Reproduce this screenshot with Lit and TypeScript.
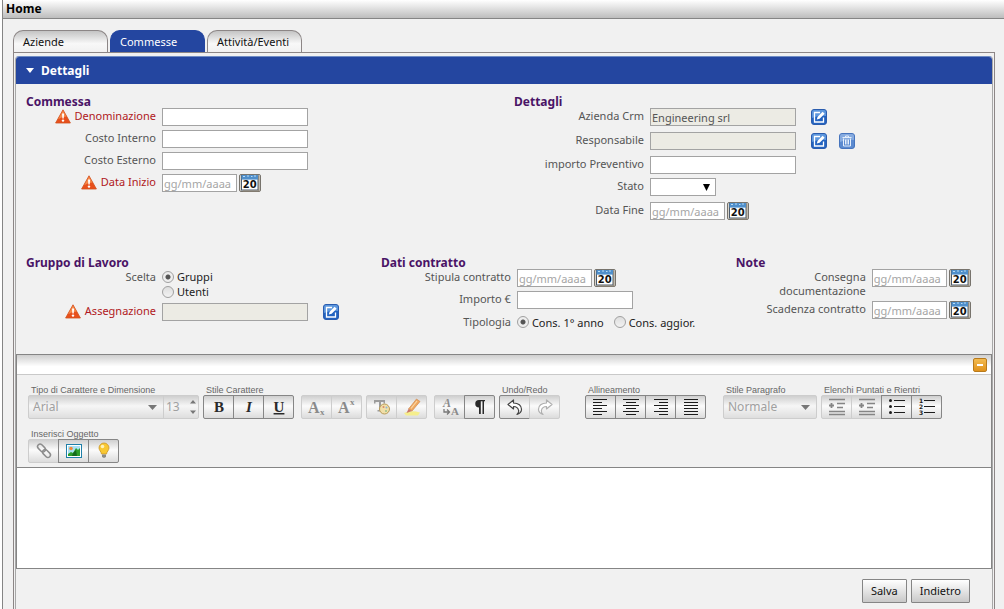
import { LitElement, html, css, svg, nothing } from "lit";
import { customElement, property, state } from "lit/decorators.js";
import { classMap } from "lit/directives/class-map.js";

const warnIcon = html`<svg class="warn" width="16" height="15" viewBox="0 0 16 15" aria-hidden="true">
  <path d="M8 .8 15.4 14H.6Z" fill="#e8501c" stroke="#d0501c" stroke-width=".8" stroke-linejoin="round"/>
  <path d="M8 1.6 11.3 7.6Q7 8 3.2 10.2Z" fill="#f58a4a"/>
  <path d="M7 4.6h2.1L8.7 9.6H7.4Z" fill="#fff"/><circle cx="8" cy="11.6" r="1.2" fill="#fff"/>
</svg>`;

const editIcon = html`<svg width="16" height="16" viewBox="0 0 16 16" aria-hidden="true">
  <rect x=".5" y=".5" width="15" height="15" rx="2.5" fill="#2363c0" stroke="#2a5cae"/>
  <path d="M1 3Q1 1 3 1h10q2 0 2 2v4Q8 6 1 9Z" fill="#5d97dd"/>
  <path d="M9 3.500H3.500v9.500h9V8.500" fill="none" stroke="#fff" stroke-width="1.300"/>
  <path d="M5.800 10.600 6.600 7.800 11.600 2.800 13.600 4.800 8.600 9.800Z" fill="#fff"/>
</svg>`;

const trashIcon = html`<svg width="16" height="16" viewBox="0 0 16 16" aria-hidden="true">
  <rect x=".5" y=".5" width="15" height="15" rx="2.5" fill="#5b8ad0" stroke="#4674bd"/>
  <path d="M1 3Q1 1 3 1h10q2 0 2 2v4Q8 6 1 9Z" fill="#86abe0"/>
  <path d="M3.500 4.500h9M6.500 4V3h3v1M4.500 5.500v7.500h7V5.500M6.500 6.500v5M8 6.500v5M9.500 6.500v5" fill="none" stroke="#e4eefb" stroke-width="1"/>
</svg>`;

const calendarIcon = html`<svg width="22" height="18" viewBox="0 0 22 18" aria-hidden="true">
  <rect x=".5" y=".5" width="21" height="17" rx="1.5" fill="#d8d4cc" stroke="#77736c"/>
  <rect x="2.5" y="1.5" width="16.5" height="14.5" fill="#fff" stroke="#4a5a6c"/>
  <rect x="2.5" y="1" width="16.5" height="4.6" fill="#4f8fcb"/>
  <path d="M4 2.5h2M8 2h2M12 2.5h1.5M15 2h2" stroke="#b9dcf5"/>
  <path d="M19.8 2v15H4" fill="none" stroke="#8e8474"/>
  <text x="10.800" y="14" text-anchor="middle" font-family="DejaVu Sans" font-weight="bold" font-size="10" fill="#111">20</text>
</svg>`;

@customElement("crm-field")
class CrmField extends LitElement {
  @property() label = "";
  @property() kind = "text";
  @property() value = "";
  @property({ type: Boolean }) required = false;
  @property({ type: Boolean }) locked = false;
  @property({ type: Boolean }) editable = false;
  @property({ type: Boolean }) removable = false;

  static styles = css`
    :host { display: grid; grid-template-columns: 130px auto; justify-content: start; column-gap: 6px; align-items: start; min-height: 22px; }
    :host([tall]) { min-height: 24px; }
    :host([double]) { min-height: 32px; }
    .label { display: flex; justify-content: flex-end; gap: 4px; text-align: right; line-height: 14px; padding-top: 1px; color: #555; }
    .required { color: #b01822; }
    .warn { flex: none; }
    .line { display: flex; align-items: center; height: 18px; }
    input, select { box-sizing: border-box; margin: 0; width: 146px; height: 18px; border: 1px solid #a3a3a3; border-radius: 0; padding: 0 1px; font: inherit; background: #fff; color: #333; outline: none; }
    .date { width: 75px; }
    .short { width: 116px; }
    input:read-only { background: #ecebe4; color: #555; }
    input::placeholder { color: #a5a5a5; opacity: 1; }
    button { display: block; border: 0; padding: 0; background: none; line-height: 0; cursor: pointer; }
    .cal { margin-left: 2px; }
    .tool { margin-left: 12px; }
    .tool:first-of-type { margin-left: 15px; }
    .pick { display: grid; }
    .pick select { grid-area: 1 / 1; width: 66px; appearance: none; }
    .arrow { grid-area: 1 / 1; justify-self: end; align-self: center; margin-right: 6px; pointer-events: none; }
  `;

  private control() {
    if (this.kind === "select")
      return html`<span class="pick"><select id="c"><option></option></select>
        <svg class="arrow" width="7" height="7" viewBox="0 0 7 7"><path d="M0 0h7L3.500 7Z" fill="#000"/></svg></span>`;
    if (this.kind === "date")
      return html`<input id="c" class="date" placeholder="gg/mm/aaaa">
        <button class="cal" aria-label="Calendario">${calendarIcon}</button>`;
    return html`<input id="c" class=${classMap({ short: this.kind === "short" })} .value=${this.value} ?readonly=${this.locked}>`;
  }

  render() {
    return html`
      <label for="c" class=${classMap({ label: true, required: this.required })}>
        ${this.required ? warnIcon : nothing}<span>${this.label}</span>
      </label>
      <div class="line">
        ${this.control()}
        ${this.editable ? html`<button class="tool" aria-label="Modifica">${editIcon}</button>` : nothing}
        ${this.removable ? html`<button class="tool" aria-label="Elimina">${trashIcon}</button>` : nothing}
      </div>`;
  }
}

@customElement("crm-choice")
class CrmChoice extends LitElement {
  @property() label = "";
  @property({ type: Array }) options: string[] = [];

  static styles = css`
    :host { display: block; padding-bottom: 4px; }
    fieldset { display: grid; grid-template-columns: 130px auto; justify-content: start; column-gap: 6px; margin: 0; border: 0; padding: 0; min-width: 0; }
    .label { text-align: right; line-height: 16px; color: #555; }
    .options { display: flex; flex-direction: column; }
    :host([inline]) fieldset { padding-top: 1px; }
    :host([inline]) .options { flex-direction: row; gap: 10px; }
    .option { display: flex; align-items: center; gap: 3px; line-height: 15px; color: #222; }
    input { appearance: none; box-sizing: border-box; width: 12px; height: 12px; margin: 0; border: 1px solid #a0a0a0; border-radius: 50%; background: linear-gradient(#dedede, #f2f2f2); }
    input:checked { background: radial-gradient(circle, #555 0 2px, #eee 3px); }
  `;

  render() {
    return html`<fieldset aria-label=${this.label}>
      <span class="label">${this.label}</span>
      <div class="options">${this.options.map((o, i) => html`
        <label class="option"><input type="radio" name="choice" ?checked=${i === 0}>${o}</label>`)}
      </div></fieldset>`;
  }
}

type Tool = { name: string; icon: unknown; off?: boolean };

const glyph = (body: unknown) => html`<svg width="20" height="20" viewBox="0 0 20 20" aria-hidden="true">${body}</svg>`;
const letter = (t: string, extra = "") => svg`<text x="10" y="15" text-anchor="middle" font-family="Liberation Serif" font-weight="bold" font-size="15"
  font-style=${extra === "i" ? "italic" : "normal"} text-decoration=${extra === "u" ? "underline" : "none"} fill="#2a2a2a">${t}</text>`;
const rules = (rows: number[][]) => svg`<path d=${rows.map(([a, b], i) => `M${a} ${2.5 + i * 3}H${b}`).join("")} stroke="#1c1c1c" stroke-width="1.1"/>`;
const indent = svg`<path d="M2 2.500h16M10 6.500h8M10 10.500h6M2 14.500h16M2 17.500h16" stroke="#858585" stroke-width="1.500"/><path d="M2 8.500h5M4.500 6v5" stroke="#858585" stroke-width="1.800"/>`;

const styleTools: Tool[] = [
  { name: "Grassetto", icon: glyph(letter("B")) },
  { name: "Corsivo", icon: glyph(letter("I", "i")) },
  { name: "Sottolineato", icon: glyph(letter("U", "u")) },
];
const scriptTools: Tool[] = [
  { name: "Pedice", off: true, icon: glyph(svg`<g font-family="Liberation Serif" font-weight="bold" fill="#8a8a8a"><text x="1" y="16" font-size="16">A</text><text x="13" y="18" font-size="9">x</text></g>`) },
  { name: "Apice", off: true, icon: glyph(svg`<g font-family="Liberation Serif" font-weight="bold" fill="#8a8a8a"><text x="1" y="16" font-size="16">A</text><text x="13" y="8" font-size="9">x</text></g>`) },
];
const colorTools: Tool[] = [
  { name: "Colore testo", off: true, icon: glyph(svg`<path d="M2 3h11v3.500h-1.500V5H9v8h1.500v1.500h-5V13H7V5H3.500v1.500H2Z" fill="#9c9c9c"/>
    <circle cx="12.500" cy="12" r="5" fill="#f1dfa8" stroke="#b79a58"/><circle cx="11.500" cy="10" r="1" fill="#d98a6a"/><circle cx="14.500" cy="10.500" r="1" fill="#8fb6d8"/><circle cx="14" cy="14" r="1" fill="#97c08a"/>`) },
  { name: "Evidenziatore", off: true, icon: glyph(svg`<path d="M2 16Q9 13 18 15.500L16 18.500H4Z" fill="#f5ee8c"/><path d="M14.500 2 18 4.500 10 14 6.500 12Z" fill="#f0a860" stroke="#cf8a50" stroke-width=".7"/>
    <path d="M6.500 12 10 14 4.500 16Z" fill="#c9776a"/><path d="M15 4 9 11.500" stroke="#fbd9a8" stroke-width="1.200"/>`) },
];
const formatTools: Tool[] = [
  { name: "Rimuovi formato", off: true, icon: glyph(svg`<g font-family="Liberation Serif" font-weight="bold" fill="#8a8a8a"><text x="3" y="10" font-size="12" font-style="italic">A</text><text x="11" y="18" font-size="11">A</text></g>
    <path d="M4 12v3h5M7 12.500 9.500 15 7 17.500" fill="none" stroke="#777" stroke-width="1.300"/>`) },
  { name: "Mostra paragrafi", icon: glyph(svg`<path d="M9 17V10.500A3.700 3.700 0 0 1 9 3h6v1.300h-1V17h-1.500V4.300H10.800V17Z" fill="#2a2a2a"/>`) },
];
const undoArrow = svg`<path d="M3 7.500 8.500 3v3c5 0 8 2.800 8 6.200 0 2.500-1.700 4.300-4.500 5.300 1.400-1.300 2-2.500 1.600-4C13 10.300 11 9.600 8.500 9.500V12Z" fill="#fff" stroke="currentColor" stroke-width="1.200" stroke-linejoin="round"/>`;
const undoTools: Tool[] = [
  { name: "Annulla", icon: glyph(svg`<g color="#444">${undoArrow}</g>`) },
  { name: "Ripeti", off: true, icon: glyph(svg`<g color="#b0b0b0" transform="matrix(-1 0 0 1 20 0)">${undoArrow}</g>`) },
];
const alignTools: Tool[] = [
  { name: "Sinistra", icon: glyph(rules([[2, 16], [2, 11], [2, 16], [2, 11], [2, 16], [2, 11]])) },
  { name: "Centro", icon: glyph(rules([[2, 18], [5, 15], [2, 18], [5, 15], [2, 18], [5, 15]])) },
  { name: "Destra", icon: glyph(rules([[3, 17], [8, 17], [3, 17], [8, 17], [3, 17], [8, 17]])) },
  { name: "Giustificato", icon: glyph(rules([[3, 17], [3, 17], [3, 17], [3, 17], [3, 17], [3, 17]])) },
];
const listTools: Tool[] = [
  { name: "Riduci rientro", off: true, icon: glyph(indent) },
  { name: "Aumenta rientro", off: true, icon: glyph(indent) },
  { name: "Elenco puntato", icon: glyph(svg`<path d="M7 3.500h11M7 9.500h11M7 15.500h11" stroke="#1c1c1c"/><g fill="#1c1c1c"><circle cx="3.500" cy="3.500" r="1.500"/><circle cx="3.500" cy="9.500" r="1.500"/><circle cx="3.500" cy="15.500" r="1.500"/></g>`) },
  { name: "Elenco numerato", icon: glyph(svg`<path d="M7 3.500h11M7 9.500h11M7 15.500h11" stroke="#1c1c1c"/><g font-family="DejaVu Sans" font-weight="bold" font-size="6" fill="#1c1c1c"><text x="2" y="6">1</text><text x="2" y="12">2</text><text x="2" y="18">3</text></g>`) },
];
const insertTools: Tool[] = [
  { name: "Collegamento", off: true, icon: glyph(svg`<g fill="none" stroke="#8c8c8c" stroke-width="1.500"><rect x="3" y="4.500" width="9" height="5" rx="2.500" transform="rotate(45 7.500 7)"/><rect x="8" y="10" width="9" height="5" rx="2.500" transform="rotate(45 12.500 12.500)"/></g>`) },
  { name: "Immagine", icon: glyph(svg`<rect x="2.500" y="3.500" width="15" height="13" fill="#fff" stroke="#1e7fa8"/><rect x="4" y="5" width="12" height="10" fill="#a8e0f4"/><circle cx="7" cy="7.500" r="1.800" fill="#ef8a3c"/><path d="M4 15v-2l3-2 2 1 3-5 2 2 2-2v8Z" fill="#2c9e2c"/><path d="M9 12 12 9l1 6H8Z" fill="#146b1c"/>`) },
  { name: "Suggerimento", icon: glyph(svg`<path d="M10 2a5 5 0 0 1 5 5c0 2.300-2.200 3.500-2.500 6h-5C7.200 10.500 5 9.300 5 7a5 5 0 0 1 5-5Z" fill="#f8c832" stroke="#c8942a" stroke-width=".8"/><circle cx="8.500" cy="5.500" r="1.800" fill="#fff2b8"/><path d="M8 13.500h4v2.500l-2 1-2-1Z" fill="#8a8a86"/>`) },
];

@customElement("crm-editor")
class CrmEditor extends LitElement {
  static styles = css`
    :host { display: block; border: 1px solid #858585; }
    .bar { display: flex; justify-content: flex-end; align-items: center; height: 19px; padding-right: 4px; border-bottom: 1px solid #c9c9c9; background: linear-gradient(#cfcfcf, #fff 60%); }
    button { cursor: pointer; font: inherit; }
    .min { width: 14px; height: 14px; border: 1px solid #b87a1c; border-radius: 2px; padding: 0; background: linear-gradient(#f3bb50, #e0921c); display: grid; place-items: center; }
    .tools { display: flex; flex-wrap: wrap; gap: 8px 7px; padding: 8px 11px 4px; }
    .cluster { display: flex; gap: 4px; align-items: flex-end; }
    .align { margin: 0 10px 0 18px; }
    .caption { height: 12px; padding-left: 3px; font: 9px/14px "Liberation Sans", Arial, sans-serif; color: #666; white-space: nowrap; }
    .group { display: flex; }
    .tool { box-sizing: border-box; width: 31px; height: 24px; margin-right: -1px; border: 1px solid #868686; padding: 0; display: grid; place-items: center; background: linear-gradient(#cfcfcf, #fbfbfb 45%, #dcdcdc); }
    .tool:first-child { border-radius: 2px 0 0 2px; }
    .tool:last-child { border-radius: 0 2px 2px 0; margin-right: 0; }
    .tool:disabled { border-color: #cdcdcd; }
    .combo { display: grid; box-sizing: border-box; height: 24px; border: 1px solid #cdcdcd; border-radius: 2px; background: linear-gradient(#cfcfcf, #f6f6f6 45%, #dedede); font-size: 12px; }
    .font { grid-template-columns: 134px 35px; }
    .style { grid-template-columns: 92px; }
    select, .size { grid-row: 1; appearance: none; border: 0; padding: 0 0 0 4px; background: none; font: inherit; color: #a0a0a0; min-width: 0; width: 100%; opacity: 1; outline: none; box-sizing: border-box; }
    .size { grid-column: 2; padding-left: 2px; border-left: 1px solid #cdcdcd; }
    select, .drop { grid-column: 1; }
    .drop, .spin { grid-row: 1; justify-self: end; align-self: center; margin-right: 6px; pointer-events: none; }
    .spin { grid-column: 2; margin-right: 2px; }
    textarea { display: block; box-sizing: border-box; width: 100%; height: 101px; border: 0; border-top: 1px solid #858585; padding: 4px; resize: none; font: inherit; background: #fff; outline: none; }
  `;

  private group(caption: string, tools: Tool[]) {
    return html`<div><div class="caption">${caption}</div><div class="group">
      ${tools.map(t => html`<button class="tool" aria-label=${t.name} ?disabled=${!!t.off}>${t.icon}</button>`)}
    </div></div>`;
  }

  render() {
    const drop = html`<svg class="drop" width="9" height="5" viewBox="0 0 9 5"><path d="M0 0h9L4.500 5Z" fill="#777"/></svg>`;
    return html`
      <div class="bar"><button class="min" aria-label="Riduci"><svg width="8" height="4"><rect x="1" y="1" width="6" height="2" fill="#fff"/></svg></button></div>
      <div class="tools">
        <div class="cluster">
          <div><div class="caption">Tipo di Carattere e Dimensione</div>
            <div class="combo font"><select aria-label="Carattere" disabled><option>Arial</option></select>${drop}
              <input class="size" aria-label="Dimensione" value="13" disabled>
              <svg class="spin" width="6" height="14" viewBox="0 0 6 14"><path d="M0 3.500h6L3 0ZM0 10.500h6L3 14Z" fill="#777"/></svg></div></div>
          ${this.group("Stile Carattere", styleTools)}
        </div>
        <div class="cluster">${this.group("", scriptTools)}${this.group("", colorTools)}</div>
        <div class="cluster">${this.group("", formatTools)}${this.group("Undo/Redo", undoTools)}</div>
        <div class="cluster align">${this.group("Allineamento", alignTools)}</div>
        <div class="cluster">
          <div><div class="caption">Stile Paragrafo</div>
            <div class="combo style"><select aria-label="Stile Paragrafo" disabled><option>Normale</option></select>${drop}</div></div>
          ${this.group("Elenchi Puntati e Rientri", listTools)}
        </div>
        <div class="cluster">${this.group("Inserisci Oggetto", insertTools)}</div>
      </div>
      <textarea aria-label="Testo"></textarea>`;
  }
}

@customElement("app-root")
class AppRoot extends LitElement {
  @state() private tab = 1;

  static styles = css`
    :host { display: flex; flex-direction: column; box-sizing: border-box; min-height: 100vh; margin-left: 2px; border-left: 1px solid #858585; background: #f1f1f1; font: 11px/14px "Noto Sans", Tahoma, sans-serif; color: #222; }
    .title { margin: 0; height: 18px; padding-left: 3px; border-bottom: 1px solid #858585; background: linear-gradient(#fff, #bdbdbd); font-size: 12px; line-height: 17px; color: #000; }
    .main { flex: 1; display: flex; flex-direction: column; padding: 11px 9px 0 10px; }
    .tabs { display: flex; gap: 2px; }
    .tab { box-sizing: border-box; width: 95px; height: 22px; border: 1px solid #8c8686; border-bottom: 0; border-radius: 10px 10px 0 0; padding: 0 0 0 9px; text-align: left; font: inherit; color: #111; background: linear-gradient(#c4c4c4, #f8f8f8 60%, #f1f1f1); cursor: pointer; }
    .on { background: #2446a0; border-color: #2446a0; color: #fff; }
    .panel { flex: 1; display: flex; flex-direction: column; border: 1px solid #8c8686; border-bottom: 0; padding: 3px 1px 0; }
    .box { flex: 1; border: 1px solid #a8a8a8; border-top-color: #6f8cc4; border-bottom: 0; border-radius: 4px 4px 0 0; }
    .head { display: flex; align-items: center; gap: 7px; height: 27px; padding-left: 10px; border-radius: 3px 3px 0 0; background: #2446a0; color: #fff; }
    .head h2 { margin: 0; font-size: 12px; line-height: 27px; }
    .two { display: grid; grid-template-columns: 1fr 1fr; padding-top: 11px; }
    .three { display: grid; grid-template-columns: 4fr 4fr 3fr; padding: 32px 0 20px; }
    section { padding-left: 10px; }
    h3 { margin: 0; font-size: 12px; line-height: 13px; color: #4a1466; }
    .actions { display: flex; justify-content: flex-end; gap: 4px; padding: 10px 22px 6px; }
    .action { box-sizing: border-box; height: 24px; border: 1px solid #858585; border-radius: 1px; padding: 0 8px; background: linear-gradient(#fff, #c9c9c9); font: inherit; color: #111; cursor: pointer; }
  `;

  render() {
    return html`
      <h1 class="title">Home</h1>
      <div class="main">
        <div class="tabs" role="tablist">${["Aziende", "Commesse", "Attività/Eventi"].map((t, i) => html`
          <button role="tab" aria-selected=${this.tab === i} class=${classMap({ tab: true, on: this.tab === i })} @click=${() => (this.tab = i)}>${t}</button>`)}
        </div>
        <div class="panel"><div class="box">
          <div class="head"><svg width="8" height="5" viewBox="0 0 8 5"><path d="M0 0h8L4 5Z" fill="#fff"/></svg><h2>Dettagli</h2></div>
          <div class="two">
            <section><h3>Commessa</h3>
              <crm-field label="Denominazione" required></crm-field>
              <crm-field label="Costo Interno"></crm-field>
              <crm-field label="Costo Esterno"></crm-field>
              <crm-field label="Data Inizio" kind="date" required></crm-field>
            </section>
            <section><h3>Dettagli</h3>
              <crm-field label="Azienda Crm" value="Engineering srl" locked editable tall></crm-field>
              <crm-field label="Responsabile" locked editable removable tall></crm-field>
              <crm-field label="importo Preventivo"></crm-field>
              <crm-field label="Stato" kind="select" tall></crm-field>
              <crm-field label="Data Fine" kind="date"></crm-field>
            </section>
          </div>
          <div class="three">
            <section><h3>Gruppo di Lavoro</h3>
              <crm-choice label="Scelta" .options=${["Gruppi", "Utenti"]}></crm-choice>
              <crm-field label="Assegnazione" required locked editable></crm-field>
            </section>
            <section><h3>Dati contratto</h3>
              <crm-field label="Stipula contratto" kind="date"></crm-field>
              <crm-field label="Importo €" kind="short"></crm-field>
              <crm-choice label="Tipologia" .options=${["Cons. 1° anno", "Cons. aggior."]} inline></crm-choice>
            </section>
            <section><h3>Note</h3>
              <crm-field label="Consegna documentazione" kind="date" double></crm-field>
              <crm-field label="Scadenza contratto" kind="date"></crm-field>
            </section>
          </div>
          <crm-editor></crm-editor>
          <div class="actions"><button class="action">Salva</button><button class="action">Indietro</button></div>
        </div></div>
      </div>`;
  }
}
